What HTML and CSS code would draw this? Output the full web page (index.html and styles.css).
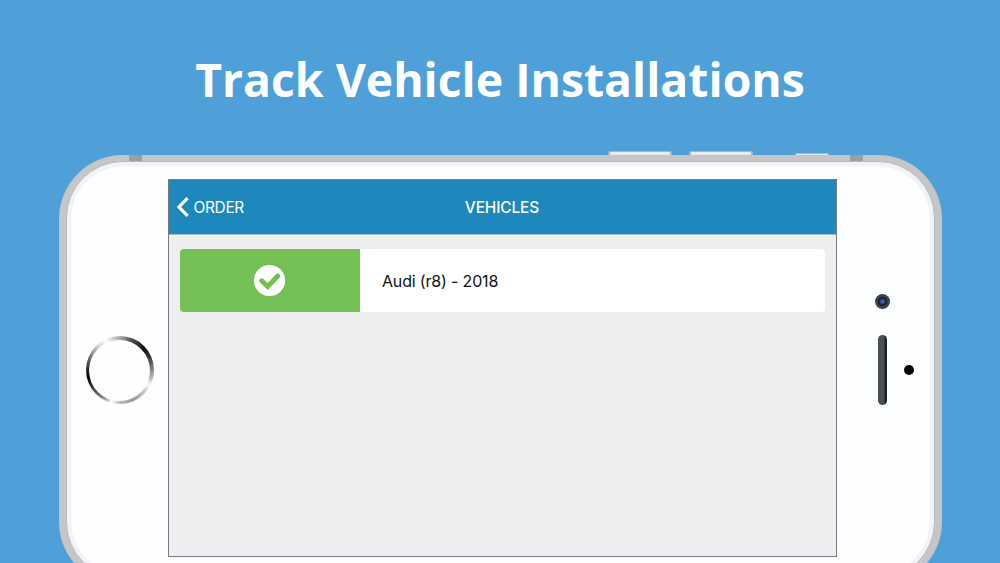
FILE: index.html
```html
<!DOCTYPE html>
<html lang="en">
<head>
<meta charset="utf-8">
<title>Track Vehicle Installations</title>
<link rel="stylesheet" href="styles.css">
</head>
<body>
<main class="promo">
  <h1 class="headline">Track Vehicle Installations</h1>
  <div class="phone">
    <i class="side-button volume-down"></i>
    <i class="side-button volume-up"></i>
    <i class="side-button mute"></i>
    <i class="antenna antenna-left"></i>
    <i class="antenna antenna-right"></i>
    <div class="bezel">
      <div class="home"></div>
      <section class="screen">
        <header class="navbar">
          <a class="back">
            <svg class="chevron" viewBox="0 0 12 20"><path d="M10.6 1.2 2 10l8.6 8.8"/></svg>
            <span>ORDER</span>
          </a>
          <h2 class="title">VEHICLES</h2>
        </header>
        <div class="list">
          <article class="vehicle">
            <div class="status">
              <svg class="check" viewBox="0 0 32 32"><circle cx="15.5" cy="15.5" r="15.6"/><path d="m7.7 15.8 6 5.7L23.8 11.1"/></svg>
            </div>
            <p class="name">Audi (r8) - 2018</p>
          </article>
        </div>
      </section>
      <div class="camera"></div>
      <div class="speaker"></div>
      <div class="sensor"></div>
    </div>
  </div>
</main>
</body>
</html>
```

FILE: styles.css
```css
* { box-sizing: border-box; }
body { margin: 0; }
.promo {
  width: 1000px;
  height: 563px;
  overflow: hidden;
  background: #4f9fd8;
  font-family: Inter, "Liberation Sans", sans-serif;
}
.headline {
  margin: 0;
  height: 155px;
  padding-top: 48px;
  text-align: center;
  white-space: nowrap;
  color: #fff;
  font: 700 46.35px/63px "Open Sans", "Noto Sans", sans-serif;
}
.phone {
  position: relative;
  width: 883px;
  height: 431px;
  margin-left: 58.5px;
  padding: 6px 7px 7px;
  border-radius: 64px;
  background: #c5c6c8;
  box-shadow: inset 0 0 1px #a9adb1;
}
.bezel {
  position: relative;
  height: 418px;
  padding: 17px 0 0 101px;
  border-radius: 57px;
  border: 1px solid #b8b9bb;
  background: #fdfeff;
  box-shadow: inset 0 0 0 4.5px #f2f3f6;
}
.side-button {
  position: absolute;
  top: -4px;
  height: 4px;
  width: 64px;
  border: 1px solid #b1b5b9;
  border-width: 1px 2px 0;
  border-radius: 2px 2px 0 0;
  background: #e9eaeb;
}
.volume-down { left: 549.5px; }
.volume-up { left: 630.5px; }
.mute { left: 736.5px; top: -2px; width: 34px; height: 2px; border-width: 1px 1px 0; }
.antenna {
  position: absolute;
  top: 0;
  width: 13px;
  height: 7px;
  background: #9d9ea0;
}
.antenna-left { left: 70.5px; }
.antenna-right { left: 791.5px; }
.home {
  position: absolute;
  left: 19px;
  top: 174px;
  width: 68px;
  height: 68px;
  border-radius: 50%;
  background: conic-gradient(#aaa 0deg, #555 20deg, #111 48deg, #333 65deg, #888 90deg, #bbb 105deg, #fff 117deg, #ccc 130deg, #999 155deg, #bbb 180deg, #fff 195deg, #999 208deg, #555 228deg, #000 258deg, #333 275deg, #888 298deg, #ddd 320deg, #fff 334deg, #ccc 348deg, #aaa 360deg);
}
.home::after {
  content: "";
  position: absolute;
  inset: 3.5px;
  border-radius: 50%;
  background: #fdfeff;
}
.screen {
  width: 669px;
  height: 378px;
  border: 1px solid #77797c;
  background: #edeef0;
}
.navbar {
  display: grid;
  grid-template-columns: 1fr auto 1fr;
  align-items: center;
  height: 55px;
  padding: 0 8px;
  background: #1e88bd;
  border-bottom: 1px solid #a4bbc9;
  color: #fff;
}
.back {
  display: flex;
  align-items: center;
  gap: 5px;
  font-size: 15.4px;
  letter-spacing: -0.3px;
}
.chevron {
  width: 12px;
  height: 20px;
  fill: none;
  stroke: #fff;
  stroke-width: 3.1;
}
.title {
  margin: 0;
  font-size: 15.4px;
  font-weight: 550;
  letter-spacing: -0.1px;
}
.list { padding: 14px 11px 0; }
.vehicle {
  display: flex;
  height: 63px;
  overflow: hidden;
  border-radius: 4px;
  background: #fff;
}
.status {
  display: flex;
  align-items: center;
  justify-content: center;
  width: 180.5px;
  background: #75c054;
}
.check { width: 32px; height: 32px; overflow: visible; }
.check circle { fill: #fff; }
.check path {
  fill: none;
  stroke: #75c054;
  stroke-width: 5;
  stroke-linecap: round;
}
.name {
  margin: 0 0 0 22px;
  color: #111;
  font-size: 16px;
  letter-spacing: -0.17px;
  line-height: 65px;
}
.camera {
  position: absolute;
  left: 808.5px;
  top: 131.5px;
  width: 15px;
  height: 15px;
  border-radius: 50%;
  background: radial-gradient(circle, #3c68b6 0 1px, #1d2c59 3px, #14181f 4px, #414446 5.2px, #3c4042 7.5px);
}
.speaker {
  position: absolute;
  left: 811.5px;
  top: 173px;
  width: 9px;
  height: 70px;
  border-radius: 4.5px;
  background: linear-gradient(90deg, #4b4e50 0 65%, #202123 80%);
}
.sensor {
  position: absolute;
  left: 837.5px;
  top: 203px;
  width: 10px;
  height: 10px;
  border-radius: 50%;
  background: #050505;
}
```
